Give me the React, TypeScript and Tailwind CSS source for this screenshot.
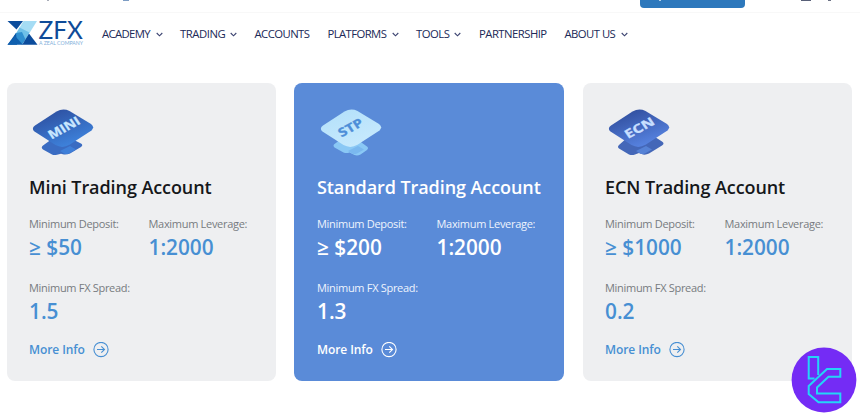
import React from "react";

const navItems = [
  { label: "ACADEMY", menu: true, box: "w-[78px]", text: "w-[50px]", track: "tracking-[-0.62px]" },
  { label: "TRADING", menu: true, box: "w-[74.5px]", text: "w-[46px]", track: "tracking-[-0.46px]" },
  { label: "ACCOUNTS", menu: false, box: "w-[73px]", text: "", track: "tracking-[-0.55px]" },
  { label: "PLATFORMS", menu: true, box: "w-[88.5px]", text: "w-[61px]", track: "tracking-[-0.58px]" },
  { label: "TOOLS", menu: true, box: "w-[63px]", text: "w-[34.5px]", track: "tracking-[-0.5px]" },
  { label: "PARTNERSHIP", menu: false, box: "w-[85.5px]", text: "", track: "tracking-[-0.52px]" },
  { label: "ABOUT US", menu: true, box: "w-[70px]", text: "w-[52.5px]", track: "tracking-[-0.54px]" },
];

function Chevron() {
  return (
    <svg className="ml-[3.5px] h-[5px] w-[7px] shrink-0" viewBox="0 0 7 5" fill="none" stroke="#3b4370" strokeWidth="1.1">
      <path d="M.7 1 3.5 3.8 6.3 1" />
    </svg>
  );
}

function Logo() {
  return (
    <svg className="h-[28px] w-[77px] overflow-visible" viewBox="7 19 77 28">
      <path d="M7.500 21H23l-6.500 8.500Z" fill="#0b4c9c" />
      <path d="M23.500 21H37L29.500 33 19 28.500Z" fill="#a5dcf4" />
      <path d="m19.500 27.500 10 5-4 7-9.500-6Z" fill="#6ec0e8" />
      <path d="m16 33 6-1 3.500 7.500-3.500 5.300-8-8.500Z" fill="#2f8fd0" />
      <path d="m16 33 1 11.800H7.500Z" fill="#0b56a6" />
      <path d="m15 36 8 8.800H7.500Z" fill="#0f5fae" />
      <path d="m29 33.500 8.500 11.300H22.200Z" fill="#0b4c9c" />
      <text x="38.500" y="39.200" textLength="44.500" lengthAdjust="spacingAndGlyphs" fontFamily="Lato, sans-serif" fontSize="25" fill="#0f4b98">ZFX</text>
      <text x="39" y="44.800" textLength="44" lengthAdjust="spacingAndGlyphs" fontFamily="Lato, sans-serif" fontSize="4.800" fill="#7fb0da">A ZEAL COMPANY</text>
    </svg>
  );
}

const tiles = {
  MINI: {
    from: "#2c4c9c", to: "#3f86e0", text: "#c9e7ff", base: "#3a6cc2", step: "#3f7fd8", width: 34, x: 19.500, y: 30.500,
    lower: "M11 36.500q-2.500 2 0 4l9 5q2 1 5 .2l4-1 3 .8q3 .3 6-1l11-6.500q2.500-1.800 0-3.500L40 30H20Z",
  },
  STP: {
    from: "#b3e0fa", to: "#c8eafd", text: "#4d8ed8", base: "#8ac8f5", step: "#7ab8ef", width: 26, x: 21.500, y: 28.500,
    lower: "M14.500 35q-2 1.500 0 3.500l9 5q3 1 6 0l5 2.500q3 1 6-.5l6.500-4.500q2-2 0-3.500L38 31H20Z",
  },
  ECN: {
    from: "#2d4a98", to: "#5a87e6", text: "#c8dfff", base: "#4467b8", step: "#5682d6", width: 31.500, x: 20, y: 30,
    lower: "M11 36q-2 1.800 0 3.500l10 6q3 1 6 0l4-1.500 4 1.500q3 .5 6-1l13-8q3-2 0-4L47 28H20Z",
  },
};

function TierIcon({ name }: { name: keyof typeof tiles }) {
  const t = tiles[name];
  return (
    <svg className="h-[50px] w-[64px]" viewBox="0 0 64 50">
      <defs>
        <linearGradient id={name} x1="0.15" y1="0" x2=".7" y2="1">
          <stop stopColor={t.from} />
          <stop offset="1" stopColor={t.to} />
        </linearGradient>
      </defs>
      <path d={t.lower} fill={t.base} />
      <path d="m28 42 10-5 6 3.500-7 4q-3 1-5 0Z" fill={t.step} />
      <path d="M2.500 22.500q-3.500-3 .5-6L24.500 2.500q6.500-3.500 13-.5L59 15q4 3 .5 6.500L37.500 35.800q-7 4-14 .3Z" fill={`url(#${name})`} />
      <text textLength={t.width} lengthAdjust="spacingAndGlyphs" transform={`matrix(.88 -.48 .55 .83 ${t.x} ${t.y})`} fontFamily="Open Sans, sans-serif" fontWeight="700" fontSize="12.5" fill={t.text} stroke={t.text} strokeWidth=".3">{name}</text>
    </svg>
  );
}

function CircleArrow() {
  return (
    <svg className="h-4 w-4" viewBox="0 0 16 16" fill="none" stroke="currentColor" strokeWidth="1.1">
      <circle cx="8" cy="7.500" r="7.100" />
      <path d="M4 7.500h7.500M8.300 4.300 11.500 7.500l-3.200 3.200" />
    </svg>
  );
}

type Account = {
  tier: keyof typeof tiles;
  title: string;
  deposit: string;
  spread: string;
  featured?: boolean;
};

const accounts: Account[] = [
  { tier: "MINI", title: "Mini Trading Account", deposit: "≥ $50", spread: "1.5" },
  { tier: "STP", title: "Standard Trading Account", deposit: "≥ $200", spread: "1.3", featured: true },
  { tier: "ECN", title: "ECN Trading Account", deposit: "≥ $1000", spread: "0.2" },
];

function Stat({ label, value, featured }: { label: string; value: string; featured?: boolean }) {
  return (
    <div className="whitespace-nowrap">
      <div className={`text-[11px] leading-4 tracking-[-0.3px] ${featured ? "text-[#eef4fd]" : "text-[#777b80]"}`}>{label}</div>
      <div className={`mb-[2px] text-[20.8px] font-semibold leading-[30px] ${featured ? "text-white" : "text-[#478fd3]"}`}>{value}</div>
    </div>
  );
}

function Card({ account }: { account: Account }) {
  const f = account.featured;
  return (
    <article className={`h-[298px] rounded-[8px] pt-[26px] ${f ? "mr-px bg-[#5a8bd8] pl-[23px] text-white" : "bg-[#eeeff1] pl-[22px]"}`}>
      <div className="h-[50px] pl-[3px]"><TierIcon name={account.tier} /></div>
      <h2 className={`mt-[16px] whitespace-nowrap text-[18px] font-semibold leading-6 tracking-[-0.08px] ${f ? "text-white" : "text-[#15171a]"}`}>{account.title}</h2>
      <div className="mt-[17px] grid grid-cols-[119.5px_1fr] gap-y-4">
        <Stat label="Minimum Deposit:" value={account.deposit} featured={f} />
        <Stat label="Maximum Leverage:" value="1:2000" featured={f} />
        <Stat label="Minimum FX Spread:" value={account.spread} featured={f} />
      </div>
      <a className={`mt-[14px] flex items-center gap-[8px] text-[12px] font-semibold leading-4 tracking-[-0.08px] ${f ? "text-white" : "text-[#478fd3]"}`}>
        More Info <CircleArrow />
      </a>
    </article>
  );
}

export default function App() {
  return (
    <main className="relative h-[417px] w-[860px] overflow-hidden bg-white font-['Open_Sans',sans-serif]">
      <div className="flex h-[13px] items-start border-b border-[#f8f8f8]">
        <div className="ml-[47px] h-px w-[2px] bg-[#a9adb8]" />
        <div className="ml-[74px] h-px w-[6px] bg-[#7d9dc4]" />
        <div className="ml-[511px] h-[7.5px] w-[104.5px] rounded-b-[4px] bg-[#2d78bc] pl-[18.5px]">
          <div className="h-px w-[2px] bg-[#b5d2ea]" />
        </div>
        <div className="ml-[56.500px] h-px w-[10px] bg-[#596078]" />
        <div className="ml-[17px] h-px w-[3px] bg-[#6c7285]" />
      </div>
      <header className="flex h-[70px] items-start pl-[7px] pt-[6px]">
        <Logo />
        <nav className="ml-[18px] flex h-[30px] items-center text-[11.300px] text-[#202957]">
          {navItems.map((n) => (
            <div key={n.label} className={`flex shrink-0 items-center whitespace-nowrap ${n.box}`}>
              <span className={`${n.text} ${n.track}`}>{n.label}</span>
              {n.menu && <Chevron />}
            </div>
          ))}
        </nav>
      </header>
      <section className="grid grid-cols-[269px_271px_269px] gap-[18px] pl-[7px]">
        {accounts.map((a) => <Card key={a.tier} account={a} />)}
      </section>
      <svg className="absolute left-[790.5px] top-[347px] h-[66px] w-[66px]" viewBox="0 0 66 66">
        <circle cx="33" cy="33" r="32.400" fill="#742cf5" />
        <g fill="none" stroke="#23d5f7" strokeWidth="2">
          <path d="M27.200 28V10h-9.500v21.500h5.800" />
          <path d="M17.700 39 36 22h13.300v7.800H37.500L26 40.500V46.500h23.300v8.800H27.500L17.700 47Z" />
        </g>
      </svg>
    </main>
  );
}
